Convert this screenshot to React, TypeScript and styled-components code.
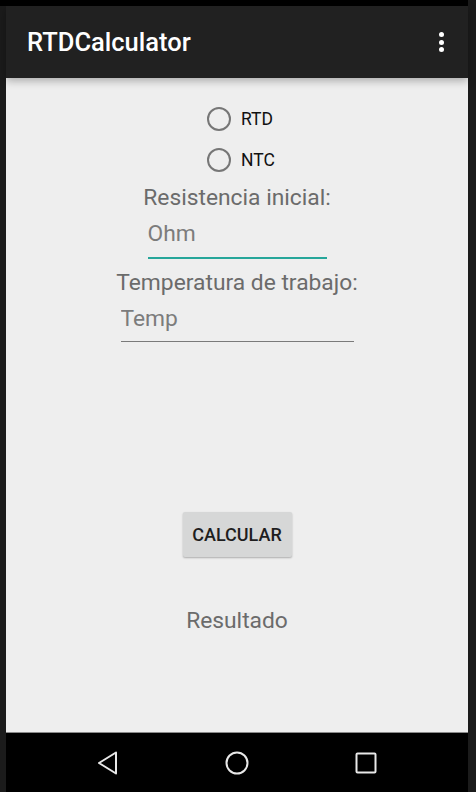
import React, { useState } from 'react';
import styled, { createGlobalStyle } from 'styled-components';

const GlobalStyle = createGlobalStyle`
  html, body {
    margin: 0;
    padding: 0;
    background: #1b1b1b;
  }
  * {
    box-sizing: border-box;
  }
`;

const Frame = styled.div`
  width: 476px;
  height: 792px;
  background: #1b1b1b;
  display: flex;
  flex-direction: column;
  font-family: Roboto, 'Noto Sans', sans-serif;
  overflow: hidden;
`;

const StatusStrip = styled.div`
  width: 468px;
  height: 6px;
  background: #000;
`;

const Screen = styled.div`
  margin-left: 6px;
  width: 462px;
  flex: 1;
  display: flex;
  flex-direction: column;
`;

const AppBar = styled.header`
  position: relative;
  z-index: 2;
  height: 72px;
  background: #212121;
  display: flex;
  align-items: center;
  justify-content: space-between;
  padding: 0 21px 0 21px;
  box-shadow: 0 3px 8px rgba(0, 0, 0, 0.28);
`;

const Title = styled.h1`
  margin: 0;
  color: #fff;
  font-size: 25.5px;
  font-weight: 500;
  letter-spacing: 0;
`;

const Overflow = styled.button`
  border: none;
  background: transparent;
  padding: 0;
  margin-right: -4px;
  width: 20px;
  height: 30px;
  display: flex;
  flex-direction: column;
  align-items: center;
  justify-content: center;
  gap: 2.5px;
`;

const Dot = styled.span`
  width: 5px;
  height: 5px;
  border-radius: 50%;
  background: #fff;
`;

const Content = styled.main`
  flex: 1;
  background: #eeeeee;
  display: flex;
  flex-direction: column;
  align-items: center;
  padding-top: 20px;
`;

const RadioGroup = styled.div`
  width: 80px;
  padding-left: 10px;
  display: flex;
  flex-direction: column;
`;

const RadioRow = styled.label`
  height: 41px;
  display: flex;
  align-items: center;
  gap: 10px;
  color: #111;
  font-size: 17.5px;
  cursor: pointer;
`;

const RadioCircle = styled.span<{ $checked: boolean }>`
  width: 24px;
  height: 24px;
  border-radius: 50%;
  border: 2.5px solid ${p => (p.$checked ? '#26a69a' : '#767676')};
  display: flex;
  align-items: center;
  justify-content: center;
  &::after {
    content: '';
    width: 10px;
    height: 10px;
    border-radius: 50%;
    background: #26a69a;
    display: ${p => (p.$checked ? 'block' : 'none')};
  }
`;

const FieldLabel = styled.div<{ $top: number }>`
  margin-top: ${p => p.$top}px;
  height: 25px;
  line-height: 25px;
  font-size: 22.8px;
  color: #6b6b6b;
`;

const Field = styled.input<{ $width: number; $focused?: boolean }>`
  margin-top: 11px;
  width: ${p => p.$width}px;
  height: ${p => (p.$focused ? 38 : 36)}px;
  padding: 0 0 ${p => (p.$focused ? 11 : 10)}px 0;
  border: none;
  border-bottom: ${p => (p.$focused ? '2px solid #26a69a' : '1px solid #7a7a7a')};
  background: transparent;
  font-family: Roboto, 'Noto Sans', sans-serif;
  font-size: 22.8px;
  line-height: 25px;
  color: #222;
  outline: none;
  &::placeholder {
    color: #7c7c7c;
  }
`;

const CalcButton = styled.button`
  margin-top: 170px;
  width: 109px;
  height: 45px;
  border: none;
  border-radius: 2px;
  background: #d6d7d7;
  box-shadow: 0 1px 2px rgba(0, 0, 0, 0.28);
  font-family: Roboto, 'Noto Sans', sans-serif;
  font-weight: 500;
  font-size: 18px;
  color: #1e1e1e;
  padding: 0;
`;

const Result = styled.div`
  margin-top: 51px;
  height: 25px;
  line-height: 25px;
  font-size: 22.8px;
  color: #6b6b6b;
`;

const NavBar = styled.nav`
  height: 60px;
  background: #000;
  border-top: 1px solid #8a8a8a;
  display: flex;
  align-items: center;
  gap: 105px;
  padding-left: 90px;
`;

const NavIcon = styled.svg`
  width: 24px;
  height: 24px;
  display: block;
`;

export default function App() {
  const [mode, setMode] = useState<'RTD' | 'NTC' | null>(null);

  return (
    <>
      <GlobalStyle />
      <Frame>
        <StatusStrip />
        <Screen>
          <AppBar>
            <Title>RTDCalculator</Title>
            <Overflow aria-label="More options">
              <Dot />
              <Dot />
              <Dot />
            </Overflow>
          </AppBar>
          <Content>
            <RadioGroup>
              {(['RTD', 'NTC'] as const).map(opt => (
                <RadioRow key={opt} onClick={() => setMode(opt)}>
                  <RadioCircle $checked={mode === opt} />
                  {opt}
                </RadioRow>
              ))}
            </RadioGroup>
            <FieldLabel $top={5}>Resistencia inicial:</FieldLabel>
            <Field $width={179} $focused placeholder="Ohm" />
            <FieldLabel $top={11}>Temperatura de trabajo:</FieldLabel>
            <Field $width={233} placeholder="Temp" />
            <CalcButton>CALCULAR</CalcButton>
            <Result>Resultado</Result>
          </Content>
          <NavBar>
            <NavIcon viewBox="0 0 24 24">
              <path d="M20 1.5 L3 12 L20 22.5 Z" fill="none" stroke="#e8e8e8" strokeWidth="2" strokeLinejoin="round" />
            </NavIcon>
            <NavIcon viewBox="0 0 24 24">
              <circle cx="12" cy="12" r="10.5" fill="none" stroke="#e8e8e8" strokeWidth="2" />
            </NavIcon>
            <NavIcon viewBox="0 0 24 24">
              <rect x="2.5" y="2.5" width="19" height="19" rx="1" fill="none" stroke="#e8e8e8" strokeWidth="2" />
            </NavIcon>
          </NavBar>
        </Screen>
      </Frame>
    </>
  );
}
